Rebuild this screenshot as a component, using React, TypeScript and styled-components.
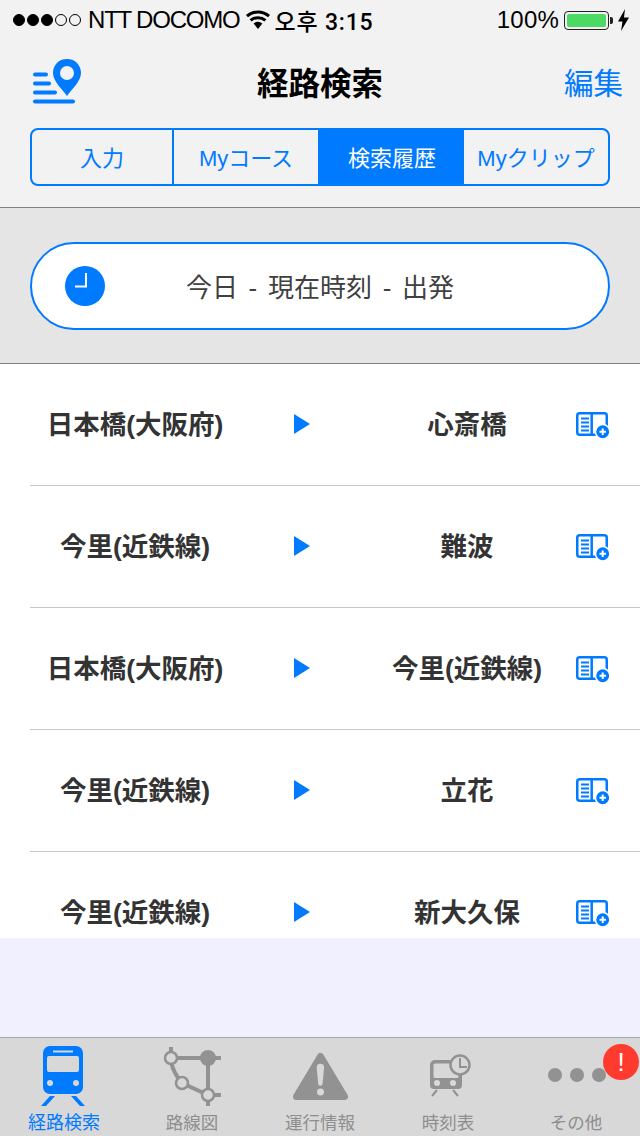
import styled, { createGlobalStyle } from "styled-components";

const BLUE = "#007aff";
const GREY = "#929292";
const JP = `"Liberation Sans", "Noto Sans CJK JP", sans-serif`;

const GlobalStyle = createGlobalStyle`
  html, body {
    margin: 0;
    padding: 0;
    background: #f0f0ff;
  }
  * {
    box-sizing: border-box;
  }
`;

const Page = styled.div`
  width: 640px;
  height: 1136px;
  display: flex;
  flex-direction: column;
  background: #f0f0ff;
  font-family: ${JP};
  overflow: hidden;
  position: relative;
`;

const Header = styled.header`
  height: 208px;
  background: #f2f2f2;
  border-bottom: 1px solid #808080;
  flex-shrink: 0;
`;

const StatusBar = styled.div`
  height: 40px;
  display: flex;
  align-items: center;
  padding: 0 10px 0 13px;
  color: #000;
  font-size: 24px;
  font-family: "Liberation Sans", "Noto Sans CJK KR", sans-serif;
`;

const Signal = styled.div`
  display: flex;
  gap: 2px;
  margin-right: 7px;
`;

const SignalDot = styled.span<{ $on: boolean }>`
  width: 12px;
  height: 12px;
  border-radius: 50%;
  border: 1px solid #000;
  background: ${(p) => (p.$on ? "#000" : "transparent")};
`;

const Carrier = styled.span`
  letter-spacing: -1.2px;
  margin-right: 5px;
`;

const Clock = styled.span`
  margin-left: 4px;
  font-family: Roboto, "Noto Sans CJK KR", sans-serif;
  font-size: 23px;
  font-weight: 500;
  letter-spacing: 0.8px;
`;

const Spacer = styled.div`
  flex: 1;
`;

const Percent = styled.span`
  letter-spacing: 0.2px;
  margin-right: 5px;
`;

const Battery = styled.div`
  width: 45px;
  height: 19px;
  border: 1px solid #222;
  border-radius: 4px;
  padding: 2px;
  position: relative;
  margin-right: 8px;
  &::after {
    content: "";
    position: absolute;
    right: -5px;
    top: 5px;
    width: 3px;
    height: 7px;
    background: #222;
    border-radius: 0 2px 2px 0;
  }
`;

const BatteryFill = styled.div`
  height: 100%;
  background: #4cd964;
  border-radius: 2px;
`;

const NavRow = styled.div`
  height: 88px;
  display: grid;
  grid-template-columns: 1fr auto 1fr;
  align-items: center;
  padding: 0 17px 0 30px;
`;

const PinIcon = styled.svg`
  display: block;
  align-self: start;
  margin-top: 15px;
`;

const Title = styled.h1`
  margin: 0 0 6px;
  padding-right: 13px;
  font-size: 31.5px;
  font-weight: 700;
  color: #000;
`;

const EditButton = styled.button`
  justify-self: end;
  border: 0;
  padding: 0;
  margin-bottom: 6px;
  background: none;
  color: ${BLUE};
  font-family: inherit;
  font-size: 29.5px;
`;

const Segments = styled.div`
  margin: 0 30px;
  height: 58px;
  display: grid;
  grid-template-columns: 140px 146px 146px 1fr;
  border: 2px solid ${BLUE};
  border-radius: 8px;
  overflow: hidden;
`;

const Segment = styled.div<{ $active?: boolean; $divider?: boolean }>`
  display: flex;
  align-items: center;
  justify-content: center;
  padding-bottom: 3px;
  font-size: 22px;
  color: ${(p) => (p.$active ? "#fff" : BLUE)};
  background: ${(p) => (p.$active ? BLUE : "transparent")};
  border-left: ${(p) => (p.$divider ? `2px solid ${BLUE}` : "0")};
`;

const FilterBand = styled.section`
  height: 156px;
  flex-shrink: 0;
  background: #e5e5e5;
  border-bottom: 1px solid #808080;
  padding: 34px 30px 0;
`;

const Pill = styled.div`
  height: 88px;
  display: grid;
  grid-template-columns: 1fr auto 1fr;
  align-items: center;
  padding-left: 33px;
  padding-right: 33px;
  background: #fff;
  border: 2px solid ${BLUE};
  border-radius: 44px;
`;

const PillText = styled.span`
  padding-bottom: 2px;
  font-size: 26px;
  word-spacing: 3.5px;
  color: #404040;
  white-space: pre;
`;

const List = styled.ul`
  height: 574px;
  flex-shrink: 0;
  margin: 0;
  padding: 0 0 0 30px;
  list-style: none;
  background: #fff;
  overflow: hidden;
`;

const Row = styled.li`
  height: 122px;
  flex-shrink: 0;
  padding-bottom: 2px;
  display: grid;
  grid-template-columns: 210px 124px 206px 1fr;
  align-items: center;
  border-bottom: 1px solid #c8c8c8;
`;

const Station = styled.span`
  padding-bottom: 2px;
  text-align: center;
  font-size: 26.5px;
  font-weight: 700;
  color: #333;
  white-space: nowrap;
`;

const Arrow = styled.span`
  justify-self: center;
  width: 0;
  height: 0;
  border-style: solid;
  border-width: 10px 0 10px 16px;
  border-color: transparent transparent transparent ${BLUE};
`;

const AddBook = styled.svg`
  margin-left: 5px;
  display: block;
`;

const TabBar = styled.nav`
  margin-top: auto;
  height: 99px;
  flex-shrink: 0;
  display: grid;
  grid-template-columns: repeat(5, 1fr);
  background: #d8d8d8;
  border-top: 1px solid #a8a8a8;
`;

const Tab = styled.div<{ $active?: boolean }>`
  position: relative;
  display: flex;
  flex-direction: column;
  align-items: center;
  color: ${(p) => (p.$active ? BLUE : "#8e8e8e")};
  font-size: ${(p) => (p.$active ? "18px" : "17.5px")};
`;

const TabIcon = styled.svg`
  display: block;
  flex-shrink: 0;
`;

const TabLabel = styled.span`
  line-height: 24px;
  margin-top: 3px;
`;

const Badge = styled.span`
  position: absolute;
  right: 1px;
  top: 6px;
  width: 36px;
  height: 36px;
  border-radius: 50%;
  background: #ff3b30;
  color: #fff;
  font-size: 26px;
  line-height: 36px;
  text-align: center;
`;

const routes = [
  ["日本橋(大阪府)", "心斎橋"],
  ["今里(近鉄線)", "難波"],
  ["日本橋(大阪府)", "今里(近鉄線)"],
  ["今里(近鉄線)", "立花"],
  ["今里(近鉄線)", "新大久保"],
];

const segments = ["入力", "Myコース", "検索履歴", "Myクリップ"];

const WifiIcon = () => (
  <svg width="26" height="20" viewBox="0 0 26 20">
    <path d="M13 19 L8.6 13.6 A7 7 0 0 1 17.4 13.6 Z" fill="#000" />
    <path d="M5.6 10.4 A11.4 11.4 0 0 1 20.4 10.4" fill="none" stroke="#000" strokeWidth="3" />
    <path d="M2 6.2 A16.4 16.4 0 0 1 24 6.2" fill="none" stroke="#000" strokeWidth="3" />
  </svg>
);

const BoltIcon = () => (
  <svg width="13" height="22" viewBox="0 0 13 22">
    <path d="M8 0 L1 12.5 H5.5 L4 22 L12 8.5 H7 Z" fill="#000" />
  </svg>
);

const RoutePin = () => (
  <PinIcon width="55" height="50" viewBox="0 0 55 50">
    <g stroke={BLUE} strokeWidth="4" strokeLinecap="round">
      <path d="M5 19.5 H16" />
      <path d="M5 28.5 H19" />
      <path d="M5 37.5 H25" />
      <path d="M5 46.5 H43" />
    </g>
    <path
      fillRule="evenodd"
      fill={BLUE}
      d="M37 4 C28.7 4 23 10.2 23 18 C23 26 32 34 37 41 C42 34 51 26 51 18 C51 10.2 45.3 4 37 4 Z M37 11 A7 7 0 1 1 37 25 A7 7 0 1 1 37 11 Z"
    />
  </PinIcon>
);

const ClockBadge = () => (
  <svg width="40" height="40" viewBox="0 0 40 40">
    <circle cx="20" cy="20" r="20" fill={BLUE} />
    <path d="M21 7 V20.5 H10" fill="none" stroke="#fff" strokeWidth="2" />
  </svg>
);

const AddBookIcon = () => (
  <AddBook width="36" height="30" viewBox="0 0 36 30">
    <rect x="2.25" y="4.25" width="29.5" height="21.5" rx="2.5" fill="none" stroke={BLUE} strokeWidth="2.5" />
    <path d="M16.7 4 V26" stroke={BLUE} strokeWidth="2.5" />
    <path d="M6 9.5 H14 M6 13.5 H14 M6 17.5 H14 M6 21.5 H14" stroke={BLUE} strokeWidth="2" />
    <circle cx="27.7" cy="22.7" r="7.2" fill={BLUE} stroke="#fff" strokeWidth="1.5" />
    <path d="M24.5 22.7 H31 M27.7 19.5 V26" stroke="#fff" strokeWidth="2" />
  </AddBook>
);

const TrainIcon = () => (
  <TabIcon width="128" height="70" viewBox="0 0 128 70">
    <path
      fillRule="evenodd"
      fill={BLUE}
      d="M50 8 H76 A7 7 0 0 1 83 15 V49 A7 7 0 0 1 76 56 H50 A7 7 0 0 1 43 49 V15 A7 7 0 0 1 50 8 Z M49 18 A2 2 0 0 0 47 20 V32 A2 2 0 0 0 49 34 H77 A2 2 0 0 0 79 32 V20 A2 2 0 0 0 77 18 Z"
    />
    <rect x="53" y="12.5" width="20" height="2" fill="#d8d8d8" />
    <circle cx="50" cy="45" r="3" fill="#d8d8d8" />
    <circle cx="76" cy="45" r="3" fill="#d8d8d8" />
    <path d="M50 58 H55 L46 68 H41 Z M71 58 H76 L85 68 H80 Z" fill={BLUE} />
  </TabIcon>
);

const RouteMapIcon = () => (
  <TabIcon width="128" height="70" viewBox="128 0 128 70">
    <g fill="none" stroke={GREY} strokeWidth="4">
      <path d="M171 9 V15" />
      <path d="M171 20 H221" />
      <path d="M208 20 V68" />
      <path d="M208 57 H221" />
      <path d="M171 24 Q174 36 182 45 L208 57" />
    </g>
    <circle cx="208" cy="20" r="8" fill={GREY} />
    <g fill="#d8d8d8" stroke={GREY} strokeWidth="2.5">
      <circle cx="171" cy="20" r="6" />
      <circle cx="182" cy="45" r="6" />
      <circle cx="208" cy="57" r="6" />
    </g>
  </TabIcon>
);

const WarningIcon = () => (
  <TabIcon width="128" height="70" viewBox="256 0 128 70">
    <path
      fill={GREY}
      stroke={GREY}
      strokeWidth="7"
      strokeLinejoin="round"
      d="M320.5 18.5 L344.5 58.5 H296.5 Z"
    />
    <path
      d="M316.7 29.5 A3.7 3.7 0 0 1 324.1 29.5 L322.6 45.5 A2.2 2.2 0 0 1 318.2 45.5 Z"
      fill="#d8d8d8"
    />
    <circle cx="320.5" cy="54" r="3.5" fill="#d8d8d8" />
  </TabIcon>
);

const TimetableIcon = () => (
  <TabIcon width="128" height="70" viewBox="384 0 128 70">
    <path
      fillRule="evenodd"
      fill={GREY}
      d="M435 22 H457 A5 5 0 0 1 462 27 V47 A4 4 0 0 1 458 51 H434 A4 4 0 0 1 430 47 V27 A5 5 0 0 1 435 22 Z M436 25.5 A2 2 0 0 0 433.5 28 V38.5 A1.5 1.5 0 0 0 435 40 H457 A1.5 1.5 0 0 0 458.5 38.5 V28 A2 2 0 0 0 456 25.5 Z"
    />
    <circle cx="437" cy="45" r="3" fill="#d8d8d8" />
    <circle cx="453" cy="45" r="3" fill="#d8d8d8" />
    <path d="M437 52 L432 58 M453 52 L458 58" stroke={GREY} strokeWidth="2" />
    <circle cx="460" cy="27" r="9.5" fill="#d8d8d8" stroke={GREY} strokeWidth="2.5" />
    <path d="M460 20 V29 H467" fill="none" stroke={GREY} strokeWidth="2" />
  </TabIcon>
);

const MoreIcon = () => (
  <TabIcon width="128" height="70" viewBox="512 0 128 70">
    <circle cx="555" cy="37" r="7" fill={GREY} />
    <circle cx="577" cy="37" r="7" fill={GREY} />
    <circle cx="599" cy="37" r="7" fill={GREY} />
  </TabIcon>
);

const App = () => {
  return (
    <Page>
      <GlobalStyle />
      <Header>
        <StatusBar>
          <Signal>
            {[true, true, true, false, false].map((on, i) => (
              <SignalDot key={i} $on={on} />
            ))}
          </Signal>
          <Carrier>NTT DOCOMO</Carrier>
          <WifiIcon />
          <Clock>오후 3:15</Clock>
          <Spacer />
          <Percent>100%</Percent>
          <Battery>
            <BatteryFill />
          </Battery>
          <BoltIcon />
        </StatusBar>
        <NavRow>
          <RoutePin />
          <Title>経路検索</Title>
          <EditButton>編集</EditButton>
        </NavRow>
        <Segments>
          {segments.map((s, i) => (
            <Segment key={s} $active={i === 2} $divider={i === 1 || i === 2}>
              {s}
            </Segment>
          ))}
        </Segments>
      </Header>
      <FilterBand>
        <Pill>
          <ClockBadge />
          <PillText>今日 - 現在時刻 - 出発</PillText>
        </Pill>
      </FilterBand>
      <List>
        {routes.map(([from, to], i) => (
          <Row key={i}>
            <Station>{from}</Station>
            <Arrow />
            <Station>{to}</Station>
            <AddBookIcon />
          </Row>
        ))}
      </List>
      <TabBar>
        <Tab $active>
          <TrainIcon />
          <TabLabel>経路検索</TabLabel>
        </Tab>
        <Tab>
          <RouteMapIcon />
          <TabLabel>路線図</TabLabel>
        </Tab>
        <Tab>
          <WarningIcon />
          <TabLabel>運行情報</TabLabel>
        </Tab>
        <Tab>
          <TimetableIcon />
          <TabLabel>時刻表</TabLabel>
        </Tab>
        <Tab>
          <MoreIcon />
          <TabLabel>その他</TabLabel>
          <Badge>!</Badge>
        </Tab>
      </TabBar>
    </Page>
  );
};

export default App;
